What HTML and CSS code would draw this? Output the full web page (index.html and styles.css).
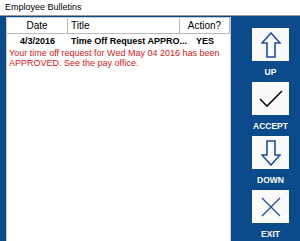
FILE: index.html
```html
<!DOCTYPE html>
<html lang="en">
<head>
    <meta charset="UTF-8">
    <title>Employee Bulletins</title>
    <link rel="stylesheet" href="styles.css">
</head>
<body>
    <div class="window">
        <div class="titlebar">Employee Bulletins</div>
        <div class="content">
            <div class="bulletin-list">
                <div class="list-header">
                    <div class="col col-date">Date</div>
                    <div class="col col-title">Title</div>
                    <div class="col col-action">Action?</div>
                </div>
                <div class="bulletin-row">
                    <div class="col col-date">4/3/2016</div>
                    <div class="col col-title">Time Off Request APPRO...</div>
                    <div class="col col-action">YES</div>
                </div>
                <div class="bulletin-body">Your time off request for Wed May 04 2016 has been APPROVED. See the pay office.</div>
            </div>
            <div class="side-buttons">
                <div class="side-btn">
                    <div class="btn-box">
                        <svg width="20" height="26" viewBox="0 0 20 26">
                            <path d="M10 1 L19 11 L14 11 L14 25 L6 25 L6 11 L1 11 Z" fill="none" stroke="#1d4f9e" stroke-width="1.6" stroke-linejoin="miter"/>
                        </svg>
                    </div>
                    <span class="btn-label">UP</span>
                </div>
                <div class="side-btn">
                    <div class="btn-box">
                        <svg width="24" height="18" viewBox="0 0 24 18">
                            <path d="M1 9 L8 16 L23 1" fill="none" stroke="#111" stroke-width="1.6"/>
                        </svg>
                    </div>
                    <span class="btn-label">ACCEPT</span>
                </div>
                <div class="side-btn">
                    <div class="btn-box">
                        <svg width="20" height="26" viewBox="0 0 20 26">
                            <path d="M10 25 L19 15 L14 15 L14 1 L6 1 L6 15 L1 15 Z" fill="none" stroke="#1d4f9e" stroke-width="1.6" stroke-linejoin="miter"/>
                        </svg>
                    </div>
                    <span class="btn-label">DOWN</span>
                </div>
                <div class="side-btn">
                    <div class="btn-box">
                        <svg width="20" height="20" viewBox="0 0 20 20">
                            <path d="M1 1 L19 19 M19 1 L1 19" fill="none" stroke="#1d4f9e" stroke-width="1.3"/>
                        </svg>
                    </div>
                    <span class="btn-label">EXIT</span>
                </div>
            </div>
        </div>
    </div>
</body>
</html>
```

FILE: styles.css
```css
body {
    margin: 0;
    font-family: "Liberation Sans", Arial, sans-serif;
    background-color: #0b4a8b;
}
.window {
    width: 300px;
    height: 241px;
    display: flex;
    flex-direction: column;
    overflow: hidden;
}
.titlebar {
    height: 15px;
    background-color: #ffffff;
    border-bottom: 1px solid #9a9a9a;
    font-size: 9px;
    line-height: 15px;
    padding-left: 5px;
    color: #000;
}
.content {
    flex-grow: 1;
    display: flex;
    background-color: #0b4a8b;
    padding: 1px 0 5px 6px;
}
.bulletin-list {
    width: 225px;
    background-color: #ffffff;
    border: 1px solid #c8c8c8;
    box-sizing: border-box;
}
.list-header,
.bulletin-row {
    display: flex;
    font-size: 10px;
    color: #000;
}
.list-header {
    height: 16px;
    line-height: 16px;
}
.list-header .col {
    border-right: 1px solid #b8b8b8;
    border-bottom: 1px solid #b8b8b8;
    box-sizing: border-box;
}
.bulletin-row {
    height: 14px;
    line-height: 14px;
    font-weight: bold;
    font-size: 9px;
}
.col-date {
    width: 61px;
    text-align: center;
}
.col-title {
    width: 112px;
    padding-left: 3px;
    box-sizing: border-box;
    white-space: nowrap;
}
.col-action {
    width: 50px;
    text-align: center;
}
.bulletin-body {
    color: #d42020;
    font-size: 9px;
    line-height: 10px;
    padding: 0 2px;
}
.side-buttons {
    flex-grow: 1;
    display: flex;
    flex-direction: column;
    align-items: center;
    padding-top: 11px;
    padding-left: 10px;
}
.side-btn {
    display: flex;
    flex-direction: column;
    align-items: center;
    height: 54px;
}
.btn-box {
    width: 37px;
    height: 33px;
    background-color: #fafafa;
    display: flex;
    align-items: center;
    justify-content: center;
}
.btn-label {
    color: #ffffff;
    font-weight: bold;
    font-size: 8.5px;
    margin-top: 6px;
}
```
